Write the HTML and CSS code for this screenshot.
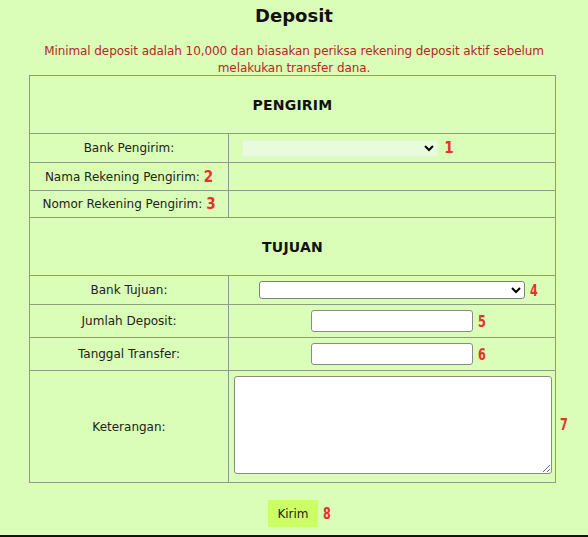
FILE: index.html
```html
<!DOCTYPE html>
<html lang="id">
<head>
    <meta charset="UTF-8">
    <meta name="viewport" content="width=device-width, initial-scale=1.0">
    <title>Deposit</title>
<link rel="stylesheet" href="styles.css">
</head>

<body>
<div class="wrapper">
  <h1 class="title">Deposit</h1>
  <p class="note">Minimal deposit adalah 10,000 dan biasakan periksa rekening deposit aktif sebelum melakukan transfer dana.</p>
  <form action="">
  <table class="form">
    <tr class="head"><th colspan="2">PENGIRIM</th></tr>
    <tr class="r1">
      <td class="label">Bank Pengirim:</td>
      <td class="field field-bank"><select class="sel-faded"><option></option></select><b class="num">1</b></td>
    </tr>
    <tr class="r2">
      <td class="label">Nama Rekening Pengirim: <b class="num">2</b></td>
      <td class="field"></td>
    </tr>
    <tr class="r3">
      <td class="label">Nomor Rekening Pengirim: <b class="num">3</b></td>
      <td class="field"></td>
    </tr>
    <tr class="head"><th colspan="2">TUJUAN</th></tr>
    <tr class="r4">
      <td class="label">Bank Tujuan:</td>
      <td class="field"><select class="sel-bank"><option></option></select><b class="num tall">4</b></td>
    </tr>
    <tr class="r5">
      <td class="label">Jumlah Deposit:</td>
      <td class="field"><input type="text" class="inp"><b class="num tall">5</b></td>
    </tr>
    <tr class="r5">
      <td class="label">Tanggal Transfer:</td>
      <td class="field"><input type="text" class="inp"><b class="num tall">6</b></td>
    </tr>
    <tr class="r6">
      <td class="label">Keterangan:</td>
      <td class="field field-area"><textarea></textarea><b class="num tall num-out">7</b></td>
    </tr>
  </table>
  <div class="submit">
    <button type="button">Kirim</button><b class="num tall">8</b>
  </div>
  </form>
</div>
</body>
</html>
```

FILE: styles.css
```css
*{
	padding:0;
	margin:0;
	box-sizing:border-box;
	}
html,body{
	background:#dafdb8;
	}
body{
	font-family:"DejaVu Sans",Verdana,sans-serif;
	font-size:12px;
	color:#222;
	}
.wrapper{
	height:537px;
	border-bottom:2px solid #111;
	padding-top:5px;
	}
.title{
	font-size:18px;
	font-weight:bold;
	text-align:center;
	line-height:22px;
	color:#111;
	}
.note{
	width:530px;
	margin:16px auto -2px;
	color:#b8281f;
	text-align:center;
	line-height:17px;
	letter-spacing:-0.08px;
	}
.form{
	width:527px;
	margin:0 0 0 29px;
	border-collapse:collapse;
	border:1px solid #8f9c84;
	}
.form th,.form td{
	border:1px solid #8f9c84;
	text-align:center;
	vertical-align:middle;
	}
.form th{
	height:58px;
	font-size:14px;
	color:#111;
	letter-spacing:0.2px;
	}
.form td.label{
	width:199px;
	}
.r1 td{ height:29px; }
.r2 td{ height:28px; }
.r3 td{ height:27px; }
.r4 td{ height:29px; }
.r5 td{ height:33px; }
.r6 td{ height:112px; }
.field{
	position:relative;
	padding-left:14px;
	}
.field-bank{
	padding-left:0;
	padding-right:88px;
	}
.num{
	font-family:"DejaVu Sans Condensed","DejaVu Sans",sans-serif;
	font-weight:bold;
	font-size:15px;
	color:#e2332a;
	margin-left:6px;
	vertical-align:middle;
	}
.num.tall{
	display:inline-block;
	font-size:16px;
	transform:scaleX(0.78);
	margin-left:4px;
	}
.label .num{
	margin-left:0;
	}
select,input,textarea{
	vertical-align:middle;
	font-family:inherit;
	}
.sel-faded{
	width:196px;
	height:17px;
	background:#e8fbdc;
	border:1px solid #e2f5d6;
	border-radius:2px;
	}
.sel-bank{
	width:266px;
	height:18px;
	background:#fff;
	border:1px solid #808080;
	border-radius:3px;
	}
.inp{
	width:162px;
	height:22px;
	background:#fff;
	border:1px solid #8a8a8a;
	border-radius:3px;
	}
.form td.field-area{
	text-align:left;
	vertical-align:top;
	padding:5px 0 0 5px;
	}
textarea{
	display:block;
	width:318px;
	height:98px;
	background:#fff;
	border:1px solid #8a8a8a;
	border-radius:3px;
	resize:both;
	}
.num-out{
	position:absolute;
	left:326px;
	top:44px;
	margin:0;
	}
.submit{
	margin-top:17px;
	text-align:center;
	padding-left:12px;
	}
.submit button{
	width:50px;
	height:27px;
	background:#ccff66;
	border:none;
	font-family:inherit;
	font-size:12px;
	color:#222;
	vertical-align:middle;
	}
```
